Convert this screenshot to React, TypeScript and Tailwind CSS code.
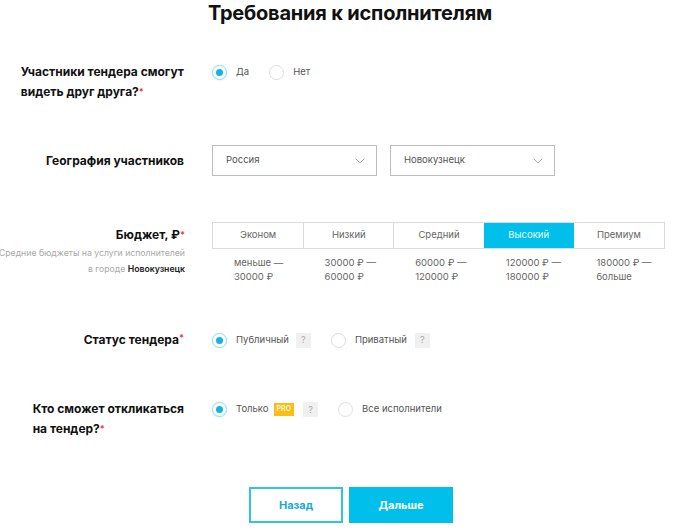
import { ChevronDown } from "lucide-react";

const cyan = "bg-[#00bfea]";

function Radio({ checked, label }: { checked?: boolean; label: string }) {
    return (
        <div className="flex items-center">
            <span
                className={
                    checked
                        ? "flex h-[15px] w-[15px] items-center justify-center rounded-full border border-[#8fdcef] shadow-[0_0_2px_#bdeaf5]"
                        : "h-[15px] w-[15px] rounded-full border border-[#dedede]"
                }
            >
                {checked && <span className="h-[7px] w-[7px] rounded-full bg-[#16b3de]" />}
            </span>
            <span className="ml-[9px] text-[9.5px] text-[#555]">{label}</span>
        </div>
    );
}

function Help() {
    return (
        <span className="flex h-[15px] w-[15px] items-center justify-center bg-[#f0f0f0] text-[9px] text-[#aaa]">
            ?
        </span>
    );
}

function Req() {
    return <span className="align-top text-[9px] text-[#e8413c]">*</span>;
}

function Select({ value }: { value: string }) {
    return (
        <div className="flex h-[31px] w-[165px] items-center justify-between border border-[#bcbcbc] pl-[13px] pr-[8px]">
            <span className="text-[9.5px] text-[#555]">{value}</span>
            <ChevronDown size={16} strokeWidth={1.2} className="text-[#999]" />
        </div>
    );
}

const tabs = [
    { name: "Эконом", lines: ["меньше —", "30000 ₽"] },
    { name: "Низкий", lines: ["30000 ₽ —", "60000 ₽"] },
    { name: "Средний", lines: ["60000 ₽ —", "120000 ₽"] },
    { name: "Высокий", lines: ["120000 ₽ —", "180000 ₽"], active: true },
    { name: "Премиум", lines: ["180000 ₽ —", "больше"] },
];

export default function App() {
    return (
        <div className="h-[532px] w-[700px] overflow-hidden bg-white font-['Inter',sans-serif] text-[#111]">
            <h1 className="h-[26px] text-center text-[20px] font-bold leading-[26px] tracking-[-0.2px]">
                Требования к исполнителям
            </h1>

            {/* Участники */}
            <div className="mt-[36px] flex">
                <div className="flex w-[184px] justify-end">
                    <p className="text-[12px] font-bold leading-[20px]">
                        Участники тендера смогут
                        <br />
                        видеть друг друга?<Req />
                    </p>
                </div>
                <div className="ml-[28px] mt-[3px] flex h-[15px] gap-[20px]">
                    <Radio checked label="Да" />
                    <Radio label="Нет" />
                </div>
            </div>

            {/* География */}
            <div className="mt-[43px] flex items-center">
                <div className="w-[184px] text-right text-[12px] font-bold">География участников</div>
                <div className="ml-[28px] flex gap-[13px]">
                    <Select value="Россия" />
                    <Select value="Новокузнецк" />
                </div>
            </div>

            {/* Бюджет */}
            <div className="mt-[46px] flex">
                <div className="flex w-[185px] flex-col items-end">
                    <p className="mt-[3px] whitespace-nowrap text-[12px] font-bold leading-[20px]">
                        Бюджет, ₽<Req />
                    </p>
                    <p className="whitespace-nowrap text-[8.7px] leading-[16px] text-[#a8a8a8]">
                        Средние бюджеты на услуги исполнителей
                    </p>
                    <p className="whitespace-nowrap text-[8.7px] leading-[16px] text-[#a8a8a8]">
                        в городе <span className="font-semibold text-[#222]">Новокузнецк</span>
                    </p>
                </div>
                <div className="ml-[27px] w-[453px]">
                    <div className="grid grid-cols-5 border border-[#dcdcdc]">
                        {tabs.map((t, i) => (
                            <div
                                key={t.name}
                                className={
                                    t.active
                                        ? `${cyan} flex h-[25px] items-center justify-center text-[9.5px] text-[#e8fbff]`
                                        : `flex h-[25px] items-center justify-center text-[9.5px] text-[#666] ${i > 0 && !tabs[i - 1].active ? "border-l border-[#dcdcdc]" : ""}`
                                }
                            >
                                {t.name}
                            </div>
                        ))}
                    </div>
                    <div className="mt-[7px] grid grid-cols-5">
                        {tabs.map((t) => (
                            <div key={t.name} className="pl-[22px] text-[9.5px] leading-[14px] text-[#666]">
                                {t.lines[0]}
                                <br />
                                {t.lines[1]}
                            </div>
                        ))}
                    </div>
                </div>
            </div>

            {/* Статус */}
            <div className="mt-[47px] flex items-center">
                <div className="w-[184px] text-right text-[12px] font-bold">
                    Статус тендера<Req />
                </div>
                <div className="ml-[28px] flex items-center">
                    <Radio checked label="Публичный" />
                    <span className="ml-[7px]">
                        <Help />
                    </span>
                    <span className="ml-[20px]">
                        <Radio label="Приватный" />
                    </span>
                    <span className="ml-[8px]">
                        <Help />
                    </span>
                </div>
            </div>

            {/* Кто сможет */}
            <div className="mt-[50px] flex">
                <div className="flex w-[184px] justify-end">
                    <p className="text-[12px] font-bold leading-[20px]">
                        Кто сможет откликаться
                        <br />
                        на тендер?<Req />
                    </p>
                </div>
                <div className="ml-[28px] mt-[3px] flex h-[15px] items-center">
                    <Radio checked label="Только" />
                    <span className="ml-[5px] flex h-[13px] items-center bg-[#fbbd16] px-[3px] text-[7px] font-bold text-[#fff3cf]">
                        PRO
                    </span>
                    <span className="ml-[9px]">
                        <Help />
                    </span>
                    <span className="ml-[20px]">
                        <Radio label="Все исполнители" />
                    </span>
                </div>
            </div>

            {/* Кнопки */}
            <div className="mt-[48px] flex justify-center gap-[6px] pl-[2px]">
                <button className="h-[36px] w-[94px] border-2 border-[#2fc3e6] text-[11px] font-bold text-[#1aa9d6]">
                    Назад
                </button>
                <button className={`${cyan} h-[36px] w-[104px] text-[11px] font-bold text-white`}>Дальше</button>
            </div>
        </div>
    );
}
